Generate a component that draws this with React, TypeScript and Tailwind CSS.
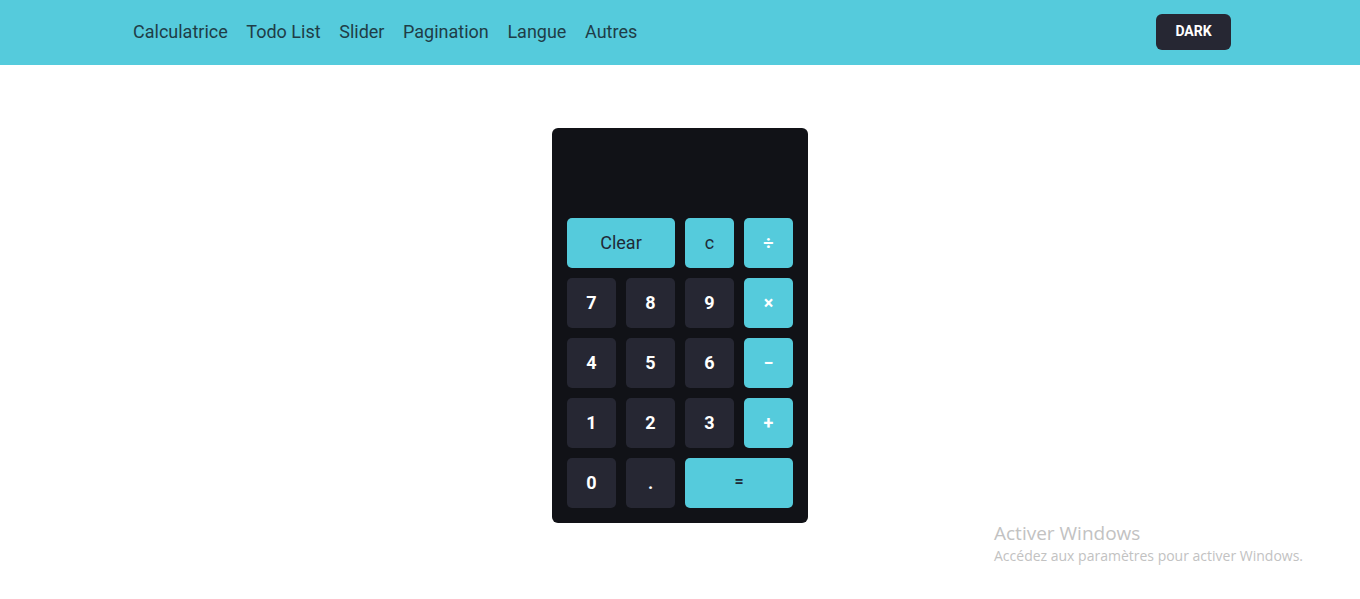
// Calculatrice : barre de navigation + calculette sombre
const navItems = ['Calculatrice', 'Todo List', 'Slider', 'Pagination', 'Langue', 'Autres']

type Key = { label: string; kind: 'num' | 'op' | 'fn' | 'eq'; wide?: boolean }

const keys: Key[] = [
  { label: 'Clear', kind: 'fn', wide: true },
  { label: 'c', kind: 'fn' },
  { label: '÷', kind: 'op' },
  { label: '7', kind: 'num' },
  { label: '8', kind: 'num' },
  { label: '9', kind: 'num' },
  { label: '×', kind: 'op' },
  { label: '4', kind: 'num' },
  { label: '5', kind: 'num' },
  { label: '6', kind: 'num' },
  { label: '−', kind: 'op' },
  { label: '1', kind: 'num' },
  { label: '2', kind: 'num' },
  { label: '3', kind: 'num' },
  { label: '+', kind: 'op' },
  { label: '0', kind: 'num' },
  { label: '.', kind: 'num' },
  { label: '=', kind: 'eq', wide: true },
]

const keyStyle: Record<Key['kind'], string> = {
  num: 'bg-[#262733] text-white font-bold text-[18px]',
  op: 'bg-[#55cbdc] text-white font-bold text-[18px]',
  fn: 'bg-[#55cbdc] text-[#1f2a36] font-normal text-[18px]',
  eq: 'bg-[#55cbdc] text-[#1f2a36] font-bold text-[16px]',
}

function Navbar() {
  return (
    <header className="flex h-[65px] items-center justify-between bg-[#55cbdc] pl-[133px] pr-[129px]">
      <nav className="flex gap-[18.6px] pb-[2px] text-[18px] text-[#1f3d47]">
        {navItems.map((item) => (
          <a key={item} href="#" className="leading-none">
            {item}
          </a>
        ))}
      </nav>
      <button className="mb-[1px] h-[36px] w-[75px] rounded-md bg-[#262733] pb-[1px] text-[14px] font-bold text-white">
        DARK
      </button>
    </header>
  )
}

function Calculator() {
  return (
    <div className="w-[256px] rounded-md bg-[#111217] px-[15px] pb-[15px]">
      {/* écran vide */}
      <div className="h-[90px]" />
      <div className="grid grid-cols-[repeat(4,49px)] gap-[10px]">
        {keys.map((k) => (
          <button
            key={k.label}
            className={`h-[50px] rounded-[5px] pb-[2px] ${keyStyle[k.kind]} ${k.wide ? 'col-span-2' : ''}`}
          >
            {k.label}
          </button>
        ))}
      </div>
    </div>
  )
}

export default function App() {
  return (
    <div className="relative min-h-[599px] bg-white font-['Roboto',sans-serif]">
      <Navbar />
      <main className="flex justify-center pt-[63px]">
        <Calculator />
      </main>
      {/* filigrane Windows */}
      <div className="pointer-events-none absolute left-[994px] top-[521px] font-['Open_Sans','Noto_Sans',sans-serif] text-[#c2c2c2]">
        <div className="text-[19px] leading-[24px]">Activer Windows</div>
        <div className="text-[14px] leading-[21px]">Accédez aux paramètres pour activer Windows.</div>
      </div>
    </div>
  )
}
